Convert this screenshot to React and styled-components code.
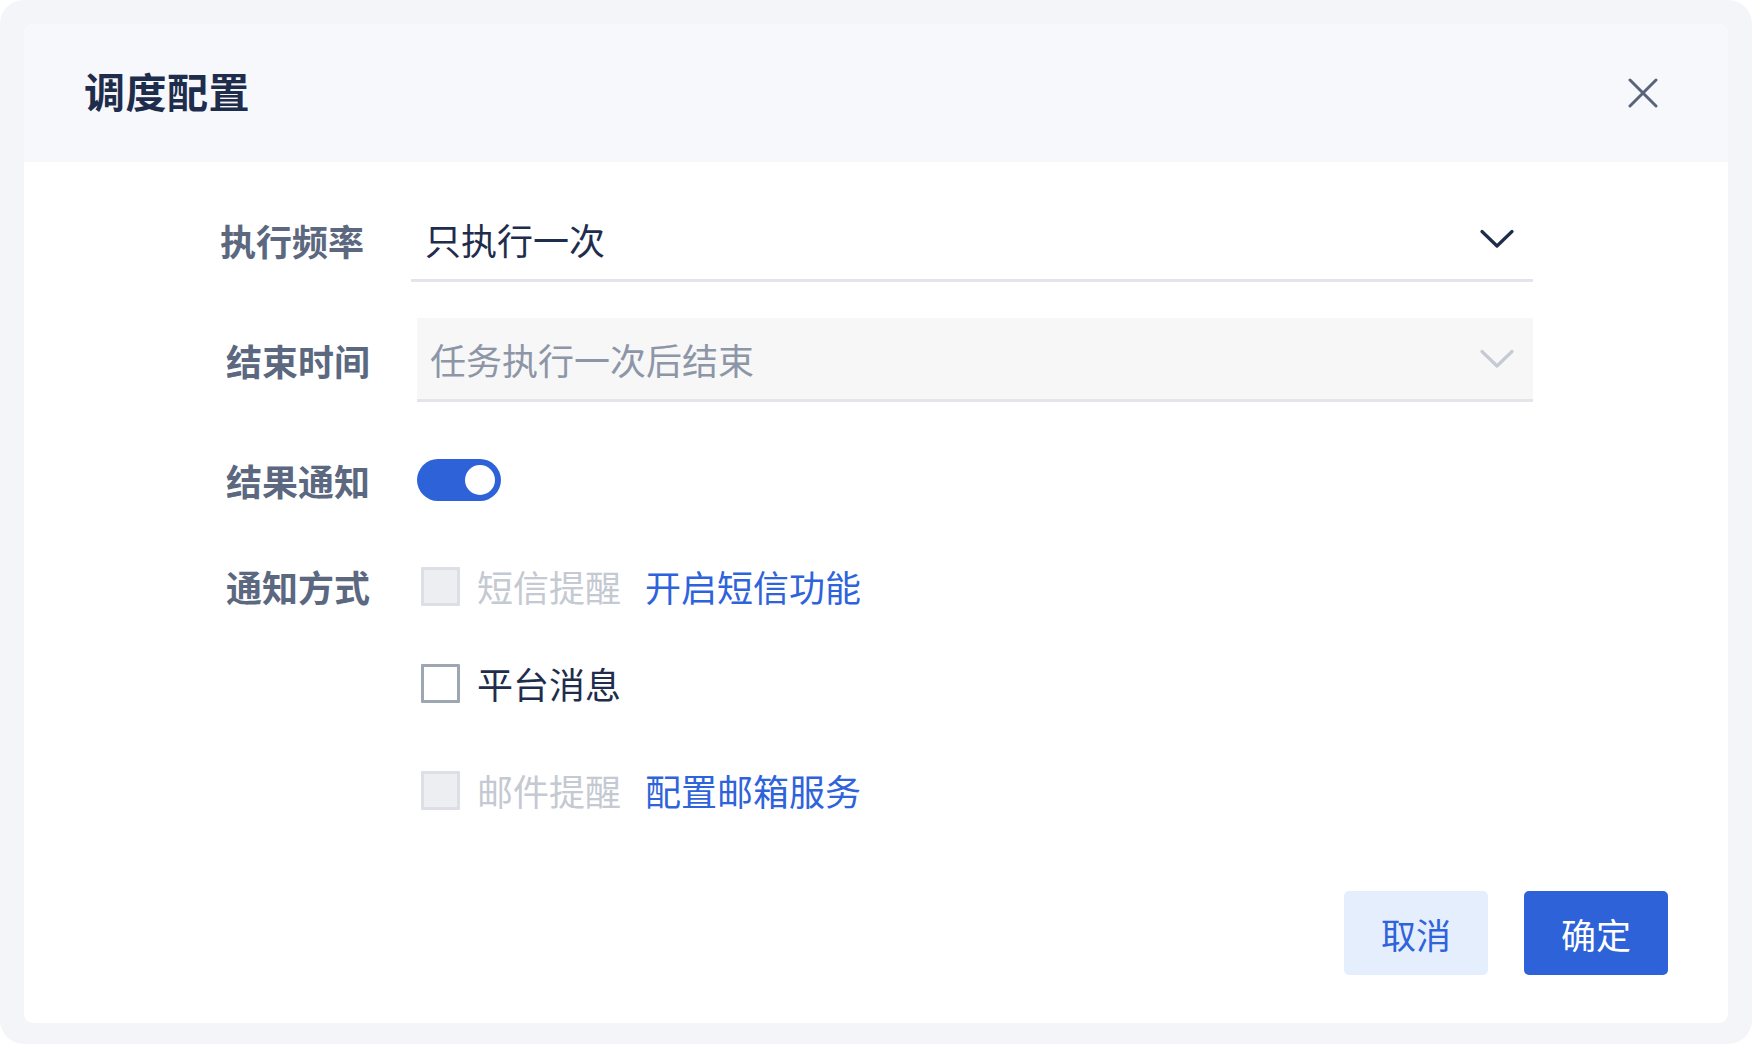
import React, { useState } from 'react';
import styled, { createGlobalStyle } from 'styled-components';

const GlobalStyle = createGlobalStyle`
  html, body {
    margin: 0;
    padding: 0;
    background: #ffffff;
  }
  body {
    font-family: "Noto Sans CJK SC", "Noto Sans", sans-serif;
  }
`;

const Backdrop = styled.div`
  width: 1752px;
  height: 1044px;
  box-sizing: border-box;
  padding: 24px 24px 21px 24px;
  background: #f4f5f9;
  border-radius: 24px;
`;

const Modal = styled.div`
  height: 100%;
  display: flex;
  flex-direction: column;
  background: #ffffff;
  border-radius: 9px;
  overflow: hidden;
`;

const Header = styled.div`
  height: 138px;
  box-sizing: border-box;
  flex-shrink: 0;
  display: flex;
  align-items: center;
  justify-content: space-between;
  padding: 0 70px 5px 60px;
  background: #f7f8fc;
`;

const Title = styled.h2`
  margin: 0;
  font-size: 41px;
  line-height: 1;
  font-weight: 700;
  color: #1f2d4d;
  letter-spacing: 0.5px;
`;

const CloseButton = styled.button`
  width: 30px;
  height: 30px;
  padding: 0;
  margin-top: 5px;
  border: none;
  background: none;
  cursor: pointer;
  display: flex;
  align-items: center;
  justify-content: center;
`;

const Body = styled.div`
  flex: 1;
  display: flex;
  flex-direction: column;
  padding: 36px 195px 48px 202px;
`;

const Row = styled.div`
  display: flex;
  align-items: ${(p) => (p.top ? 'flex-start' : 'center')};
  gap: 49px;
  min-height: 84px;
  margin-top: ${(p) => p.gap || 0}px;
  margin-left: ${(p) => (p.nudge ? -6 : 0)}px;
`;

const Label = styled.div`
  width: 142px;
  flex-shrink: 0;
  font-size: 36px;
  line-height: 58px;
  font-weight: 700;
  color: #5b6880;
  white-space: nowrap;
`;

const Select = styled.div`
  flex: 1;
  height: 84px;
  box-sizing: border-box;
  display: flex;
  align-items: center;
  justify-content: space-between;
  padding: 0 19px 0 ${(p) => (p.disabled ? 13 : 14)}px;
  background: ${(p) => (p.disabled ? '#f7f7f8' : '#ffffff')};
  border-bottom: 3px solid #e4e5ea;
  cursor: ${(p) => (p.disabled ? 'not-allowed' : 'pointer')};
`;

const SelectText = styled.span`
  font-size: 36px;
  line-height: 1;
  color: ${(p) => (p.muted ? '#8d96a7' : '#1f2d4d')};
`;

const Toggle = styled.button`
  width: 84px;
  height: 42px;
  padding: 0;
  border: none;
  border-radius: 21px;
  background: ${(p) => (p.on ? '#2d62d9' : '#c9ced8')};
  position: relative;
  cursor: pointer;
`;

const Knob = styled.span`
  position: absolute;
  top: 6px;
  left: ${(p) => (p.on ? 48 : 6)}px;
  width: 30px;
  height: 30px;
  border-radius: 50%;
  background: #ffffff;
`;

const OptionList = styled.div`
  display: flex;
  flex-direction: column;
  padding-left: 4px;
`;

const Option = styled.label`
  display: flex;
  align-items: center;
  height: 58px;
  margin-top: ${(p) => p.gap || 0}px;
  cursor: ${(p) => (p.disabled ? 'not-allowed' : 'pointer')};
`;

const Box = styled.span`
  width: 39px;
  height: 39px;
  box-sizing: border-box;
  flex-shrink: 0;
  border: 3px solid ${(p) => (p.disabled ? '#dcdfe5' : '#9ea6b2')};
  background: ${(p) => (p.disabled ? '#eceef2' : '#ffffff')};
  border-radius: 1px;
`;

const OptionText = styled.span`
  margin-left: 17px;
  font-size: 36px;
  line-height: 1;
  color: ${(p) => (p.disabled ? '#c4c9d2' : '#1f2d4d')};
`;

const Link = styled.a`
  margin-left: 24px;
  font-size: 36px;
  line-height: 1;
  color: #2e63db;
  text-decoration: none;
  cursor: pointer;
`;

const Footer = styled.div`
  margin-top: auto;
  display: flex;
  justify-content: flex-end;
  gap: 36px;
  margin-right: -135px;
`;

const Button = styled.button`
  width: 144px;
  height: 84px;
  border: none;
  border-radius: 5px;
  font-family: inherit;
  font-size: 35px;
  background: ${(p) => (p.primary ? '#2d62d9' : '#e5eefd')};
  color: ${(p) => (p.primary ? '#ffffff' : '#2e63db')};
  cursor: pointer;
`;

const Chevron = ({ color }) => (
  <svg width="34" height="20" viewBox="0 0 34 20" fill="none">
    <path d="M2 2.5 L17 17 L32 2.5" stroke={color} strokeWidth="3.2" strokeLinecap="round" strokeLinejoin="round" />
  </svg>
);

const CloseIcon = () => (
  <svg width="30" height="30" viewBox="0 0 30 30" fill="none">
    <path d="M2 2 L28 28 M28 2 L2 28" stroke="#5a6478" strokeWidth="3" strokeLinecap="round" />
  </svg>
);

const options = [
  { id: 'sms', text: '短信提醒', disabled: true, link: '开启短信功能', gap: 0 },
  { id: 'platform', text: '平台消息', disabled: false, gap: 39 },
  { id: 'mail', text: '邮件提醒', disabled: true, link: '配置邮箱服务', gap: 49 },
];

const App = () => {
  const [notify, setNotify] = useState(true);

  return (
    <>
      <GlobalStyle />
      <Backdrop>
        <Modal>
          <Header>
            <Title>调度配置</Title>
            <CloseButton aria-label="关闭">
              <CloseIcon />
            </CloseButton>
          </Header>
          <Body>
            <Row nudge>
              <Label>执行频率</Label>
              <Select>
                <SelectText>只执行一次</SelectText>
                <Chevron color="#1f2d4d" />
              </Select>
            </Row>
            <Row gap={36}>
              <Label>结束时间</Label>
              <Select disabled>
                <SelectText muted>任务执行一次后结束</SelectText>
                <Chevron color="#c5cad3" />
              </Select>
            </Row>
            <Row gap={36}>
              <Label>结果通知</Label>
              <Toggle on={notify ? 1 : 0} onClick={() => setNotify(!notify)}>
                <Knob on={notify ? 1 : 0} />
              </Toggle>
            </Row>
            <Row gap={35} top>
              <Label>通知方式</Label>
              <OptionList>
                {options.map((o) => (
                  <Option key={o.id} gap={o.gap} disabled={o.disabled}>
                    <Box disabled={o.disabled} />
                    <OptionText disabled={o.disabled}>{o.text}</OptionText>
                    {o.link && <Link>{o.link}</Link>}
                  </Option>
                ))}
              </OptionList>
            </Row>
            <Footer>
              <Button>取消</Button>
              <Button primary>确定</Button>
            </Footer>
          </Body>
        </Modal>
      </Backdrop>
    </>
  );
};

export default App;
